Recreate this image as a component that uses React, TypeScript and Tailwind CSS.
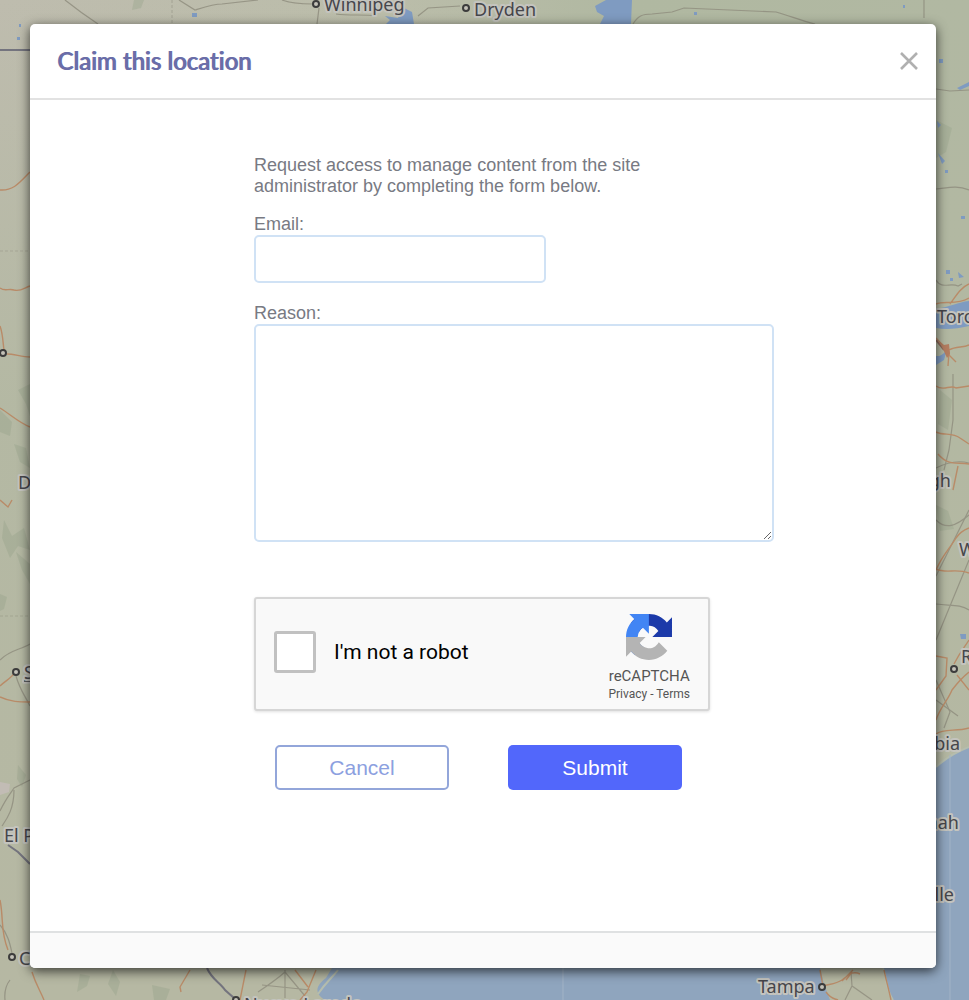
import { useState } from "react";

const mapLabels = [
  { text: "Winnipeg", x: 324, y: 11 },
  { text: "Dryden", x: 474, y: 16 },
  { text: "Denver", x: 18, y: 489 },
  { text: "Santa Fe", x: 24, y: 679 },
  { text: "El Paso", x: 4, y: 842 },
  { text: "Chihuahua", x: 19, y: 965 },
  { text: "Toronto", x: 937, y: 323 },
  { text: "Pittsburgh", x: 951, y: 487, end: true },
  { text: "Washington", x: 959, y: 556 },
  { text: "Raleigh", x: 961, y: 663 },
  { text: "Columbia", x: 960, y: 750, end: true },
  { text: "Savannah", x: 959, y: 829, end: true },
  { text: "Jacksonville", x: 954, y: 901, end: true },
  { text: "Nuevo Laredo", x: 244, y: 1011 },
  { text: "Tampa", x: 758, y: 993 },
];

const mapTowns = [
  [316, 4],
  [466, 8],
  [3, 353],
  [16, 672],
  [12, 957],
  [954, 669],
  [822, 987],
  [236, 1000],
];

const roads = [
  "M0 190C14 191 20 182 30 172",
  "M0 288C5 292 9 288 14 290C20 292 24 288 30 286",
  "M0 326C3 334 3 344 4 350M7 354C14 354 22 357 30 357",
  "M0 408C10 414 18 422 30 427",
  "M0 500L8 507L12 500M0 686C6 680 12 678 15 672M0 697C10 702 20 702 30 702",
  "M0 900C4 920 0 930 8 950M32 972C36 985 40 990 44 1000",
  "M190 970L180 987L181 992M246 970L240 1000M295 970L308 987M316 970L307 992L300 1000",
  "M936 304C945 300 955 306 969 298M950 304C956 296 960 288 969 284",
  "M936 338L949 352L948 366M949 350C956 346 963 348 969 345M936 386C944 392 950 384 956 388L969 386",
  "M936 432C944 436 952 432 960 438L969 444M938 454C948 466 956 462 969 464M958 466L953 490M949 355L956 362",
  "M936 570C942 556 950 548 956 538C960 532 964 530 969 528M936 569C946 574 956 568 969 573",
  "M936 656L947 658L946 676L936 690M954 664C960 652 964 648 969 640M957 675L969 690",
  "M936 720C940 708 948 700 952 690C958 682 964 676 969 672M936 734C944 728 956 732 969 728",
  "M820 970L823 986C830 984 836 984 842 980C848 976 852 970 860 974M842 981L853 970M884 970C886 980 888 986 891 1000",
  "M826 992C832 1000 834 998 838 1000M852 972L846 980",
];

const minorRoads = [
  "M65 0C75 8 86 16 98 24",
  "M179 0L195 10C208 6 214 4 222 4L258 0M282 0C292 4 304 4 313 4M319 8L317 24M336 14C350 16 364 14 376 16",
  "M418 16L428 8L460 6M633 24C638 16 642 14 652 14L672 12L684 8L776 12C790 16 800 20 815 24",
  "M924 0V18M936 89L950 91L969 90M936 189C948 188 956 185 969 190",
  "M936 280C942 290 950 282 958 286L962 284M953 374V420L949 450L944 470",
  "M0 660C10 650 20 650 30 644M16 676C20 690 24 694 30 706M0 811C5 800 10 794 14 788L30 780M14 790C14 810 6 820 2 826",
  "M0 925C8 934 10 944 12 953M5 1000C4 990 6 985 10 980",
  "M258 992C270 984 276 980 285 972M285 970V998M262 985L310 990M285 972L305 996",
  "M936 468C948 462 958 460 969 463M936 604C950 606 960 604 969 610M936 640L969 560M936 576L969 510M936 680L950 712L944 728",
  "M936 520C946 530 956 526 969 515M958 716L936 700M845 1000L852 986L872 1000M852 986L851 972",
];

const lakes = [
  "M385 16L398 18L404 8L412 12L414 24H386L390 20Z",
  "M595 6L606 0H632L631 24H600L604 16L597 12Z",
  "M936 309C950 307 958 302 969 301V326C956 329 946 330 936 328Z",
  "M936 356C942 357 946 351 947 349L944 360L936 365Z",
];

const forests = [
  "M134 0h10l-3 8-9 2Z",
  "M30 384l-12 6 8 14 4 12Z",
  "M0 410l12 12-2 14-10-4Z",
  "M14 444l12 4 4 20-10-6Z",
  "M4 520l8 16 12-8 6 22-12-4-8 12-8-20Z",
  "M16 552l14 12v20l-8-14Z",
  "M0 594l7 3-3 12-4 2Z",
  "M18 765l8 10-4 12-5-8Z",
  "M80 974l10 2-3 10-10 6Z",
  "M113 970l7 12-4 14-8-12Z",
  "M152 985l18 4-4 11h-12Z",
  "M936 120l16 8-6 24-10 6Z",
  "M940 390l12 10-4 30-10-6Z",
  "M936 505l12 6 6 18-14 2Z",
];

const MapBackdrop = () => (
  <svg
    className="absolute inset-0 h-full w-full"
    viewBox="0 0 969 1000"
    preserveAspectRatio="xMidYMid slice"
    aria-hidden="true"
  >
    <defs>
      <linearGradient id="land" x1="0" y1="0" x2="1" y2="0">
        <stop offset="0" stopColor="#bebcae" />
        <stop offset="0.4" stopColor="#bbbdaa" />
        <stop offset="0.65" stopColor="#b0b8a1" />
        <stop offset="1" stopColor="#b1b8a2" />
      </linearGradient>
      <linearGradient id="plains" x1="0" y1="0" x2="0" y2="1">
        <stop offset="0" stopColor="#b3b8a2" stopOpacity="0" />
        <stop offset="0.4" stopColor="#b3b8a2" stopOpacity="0.9" />
        <stop offset="1" stopColor="#b6b8a3" />
      </linearGradient>
    </defs>
    <rect width="969" height="1000" fill="url(#land)" />
    <rect width="969" height="1000" fill="url(#plains)" />
    <path
      d="M325 1000C312 992 318 984 326 978L332 968H820L824 984L830 1000ZM883 968C887 980 886 990 893 1000H969V747C956 752 946 758 936 767L900 800V968Z"
      fill="#8fa5be"
    />
    <path
      d="M936 767C946 758 956 752 969 747M318 994C326 982 332 978 338 970M883 968C887 980 886 990 893 1000"
      fill="none"
      stroke="#b5bdae"
      strokeWidth="2"
    />
    <path d="M950 755V1000M563 968V1000" stroke="#a2b3c6" strokeWidth="1" />
    <g fill="#98a48b" opacity="0.4">
      {forests.map((d) => (
        <path key={d} d={d} />
      ))}
    </g>
    <path d="M0 782L10 784L9 792L0 795Z" fill="#c2bcb5" />
    <g fill="#7f9bc1">
      {lakes.map((d) => (
        <path key={d} d={d} />
      ))}
      <path d="M192 13h5v4h-5ZM19 24h2v3h-2ZM17 37h3v3h-3ZM694 12h3v3h-3ZM903 5h2v3h-2ZM939 59h4v4h-4ZM957 88l12-6v4l-9 4ZM937 121l4 4-3 3ZM938 153l7 8-3 3ZM945 170h3v3h-3ZM961 216h4v3h-4ZM946 270h4v4h-4ZM958 272l6 5-5 1ZM950 278h3v3h-3ZM960 634h6v5h-5Z" />
    </g>
    <g fill="none" stroke="#8e8c7d" strokeWidth="1.2" opacity="0.8">
      {minorRoads.map((d) => (
        <path key={d} d={d} />
      ))}
      <path d="M172 0V24M0 251H30M0 616H30" strokeDasharray="3 2" opacity="0.5" />
    </g>
    <g fill="none" stroke="#b98b68" strokeWidth="1.4">
      {roads.map((d) => (
        <path key={d} d={d} />
      ))}
    </g>
    <g fill="none" stroke="#74747e" strokeWidth="2">
      <path d="M0 50H30M8 845L18 852L30 864M207 968C212 980 220 982 225 990L234 998" />
      <path d="M936 340L944 350" stroke="#8b6a5c" />
    </g>
    <path d="M938 340l6 5 5-1 1 10-3 4-4-9Z" fill="#b47d60" />
    <g fill="#c3c1b8" stroke="#3c3c3c" strokeWidth="2">
      {mapTowns.map(([cx, cy]) => (
        <circle key={`${cx}-${cy}`} cx={cx} cy={cy} r="3" />
      ))}
    </g>
    <g
      className="[paint-order:stroke]"
      fontFamily="'Noto Sans', sans-serif"
      fontSize="18"
      fill="#46464b"
      stroke="#c4c4be"
      strokeWidth="4"
      strokeLinejoin="round"
    >
      {mapLabels.map((label) => (
        <text
          key={label.text}
          x={label.x}
          y={label.y}
          textAnchor={label.end ? "end" : "start"}
          textDecoration={label.text === "Santa Fe" ? "underline" : undefined}
        >
          {label.text}
        </text>
      ))}
    </g>
  </svg>
);

const RecaptchaLogo = () => (
  <svg className="h-[46px] w-[46px]" viewBox="0 0 64 64" aria-hidden="true">
    <path
      fill="#1c3aa9"
      d="M64 31.955l-.033-1.37V4.687l-7.16 7.16C50.948 4.674 42.033.093 32.05.093c-10.4 0-19.622 4.96-25.458 12.64l11.736 11.86a15.55 15.55 0 0 1 4.754-5.334c2.05-1.6 4.952-2.906 8.968-2.906.485 0 .86.057 1.135.163 4.976.393 9.288 3.14 11.828 7.124l-8.307 8.307L64 31.953"
    />
    <path
      fill="#4285f4"
      d="M31.862.094l-1.37.033H4.594l7.16 7.16C4.58 13.147 0 22.06 0 32.046c0 10.4 4.96 19.622 12.64 25.458L24.5 45.768a15.55 15.55 0 0 1-5.334-4.754c-1.6-2.05-2.906-4.952-2.906-8.968 0-.485.057-.86.163-1.135.393-4.976 3.14-9.288 7.124-11.828l8.307 8.307L31.86.095"
    />
    <path
      fill="#b4b4b4"
      d="M.001 32.045l.033 1.37v25.898l7.16-7.16c5.86 7.173 14.774 11.754 24.76 11.754 10.4 0 19.622-4.96 25.458-12.64l-11.736-11.86a15.55 15.55 0 0 1-4.754 5.334c-2.05 1.6-4.952 2.906-8.968 2.906-.485 0-.86-.057-1.135-.163-4.976-.393-9.288-3.14-11.828-7.124l8.307-8.307c-10.522.04-22.4.066-27.295-.005"
    />
  </svg>
);

const Recaptcha = () => (
  <div className="flex h-[114px] w-full max-w-[456px] items-center justify-between rounded-[3px] border-2 border-[#d6d6d6] bg-[#f9f9f9] px-[18px] font-['Roboto',sans-serif] shadow-[0_1px_3px_rgba(0,0,0,0.12)]">
    <label className="flex items-center gap-[18px] pb-1 text-[21px] text-black">
      <input
        type="checkbox"
        className="h-[42px] w-[42px] appearance-none rounded-[3px] border-3 border-[#c1c1c1] bg-white checked:bg-[#4285f4]"
      />
      I'm not a robot
    </label>
    <div className="flex flex-col items-center pt-2 text-[#555]">
      <RecaptchaLogo />
      <p className="mt-[6px] text-[15px] leading-5">reCAPTCHA</p>
      <p className="text-[12px] leading-4">
        <a href="#privacy">Privacy</a> - <a href="#terms">Terms</a>
      </p>
    </div>
  </div>
);

const ClaimForm = () => {
  const [email, setEmail] = useState("");
  const [reason, setReason] = useState("");

  return (
    <form
      className="w-full max-w-[520px] text-[18px] leading-[21px] text-[#787a83]"
      onSubmit={(e) => e.preventDefault()}
    >
      <p className="max-w-[420px]">
        Request access to manage content from the site administrator by
        completing the form below.
      </p>
      <label htmlFor="email" className="mt-[17px] block">
        Email:
      </label>
      <input
        id="email"
        type="email"
        value={email}
        onChange={(e) => setEmail(e.target.value)}
        className="block h-12 w-full max-w-[292px] rounded-[5px] border-2 border-[#d0e2f5] bg-white px-3 outline-none"
      />
      <label htmlFor="reason" className="mt-5 block">
        Reason:
      </label>
      <textarea
        id="reason"
        value={reason}
        onChange={(e) => setReason(e.target.value)}
        className="block h-[218px] w-full resize rounded-[5px] border-2 border-[#d0e2f5] bg-white px-3 py-2 outline-none"
      />
      <div className="mt-[55px]">
        <Recaptcha />
      </div>
      <div className="mt-[34px] flex gap-[59px] pl-[21px] text-[21px]">
        <button
          type="button"
          className="h-[45px] w-[174px] rounded-[5px] border-2 border-[#93a6da] bg-white text-[#8ca0e0]"
        >
          Cancel
        </button>
        <button
          type="submit"
          className="h-[45px] w-[174px] rounded-[5px] bg-[#5267fb] text-white"
        >
          Submit
        </button>
      </div>
    </form>
  );
};

const App = () => {
  return (
    <div className="relative flex min-h-screen overflow-hidden bg-[#b5b8a2] pt-6 pr-[33px] pb-8 pl-[30px] font-['Liberation_Sans',Arial,sans-serif]">
      <MapBackdrop />
      <div
        role="dialog"
        aria-labelledby="claim-title"
        className="relative flex flex-1 flex-col overflow-hidden rounded-[5px] bg-white shadow-[0_3px_12px_rgba(0,0,0,0.7)]"
      >
        <header className="flex h-[76px] items-center justify-between border-b-2 border-[#e2e2e2] pr-[18px] pl-[27px]">
          <h1
            id="claim-title"
            className="font-['Lato',sans-serif] text-[24px] font-medium text-[#6a6da8] [font-variant-ligatures:none] [text-shadow:1px_0_currentColor]"
          >
            Claim this location
          </h1>
          <button type="button" aria-label="Close">
            <svg
              className="h-[18px] w-[18px]"
              viewBox="0 0 18 18"
              fill="none"
              stroke="#b0b0b0"
              strokeWidth="2.6"
            >
              <path d="M1 1L17 17M17 1L1 17" />
            </svg>
          </button>
        </header>
        <main className="flex-1 pt-[55px] pr-6 pb-12 pl-56">
          <ClaimForm />
        </main>
        <footer className="h-[37px] border-t-2 border-[#dfe1e2] bg-[#fafafa]" />
      </div>
    </div>
  );
};

export default App;
